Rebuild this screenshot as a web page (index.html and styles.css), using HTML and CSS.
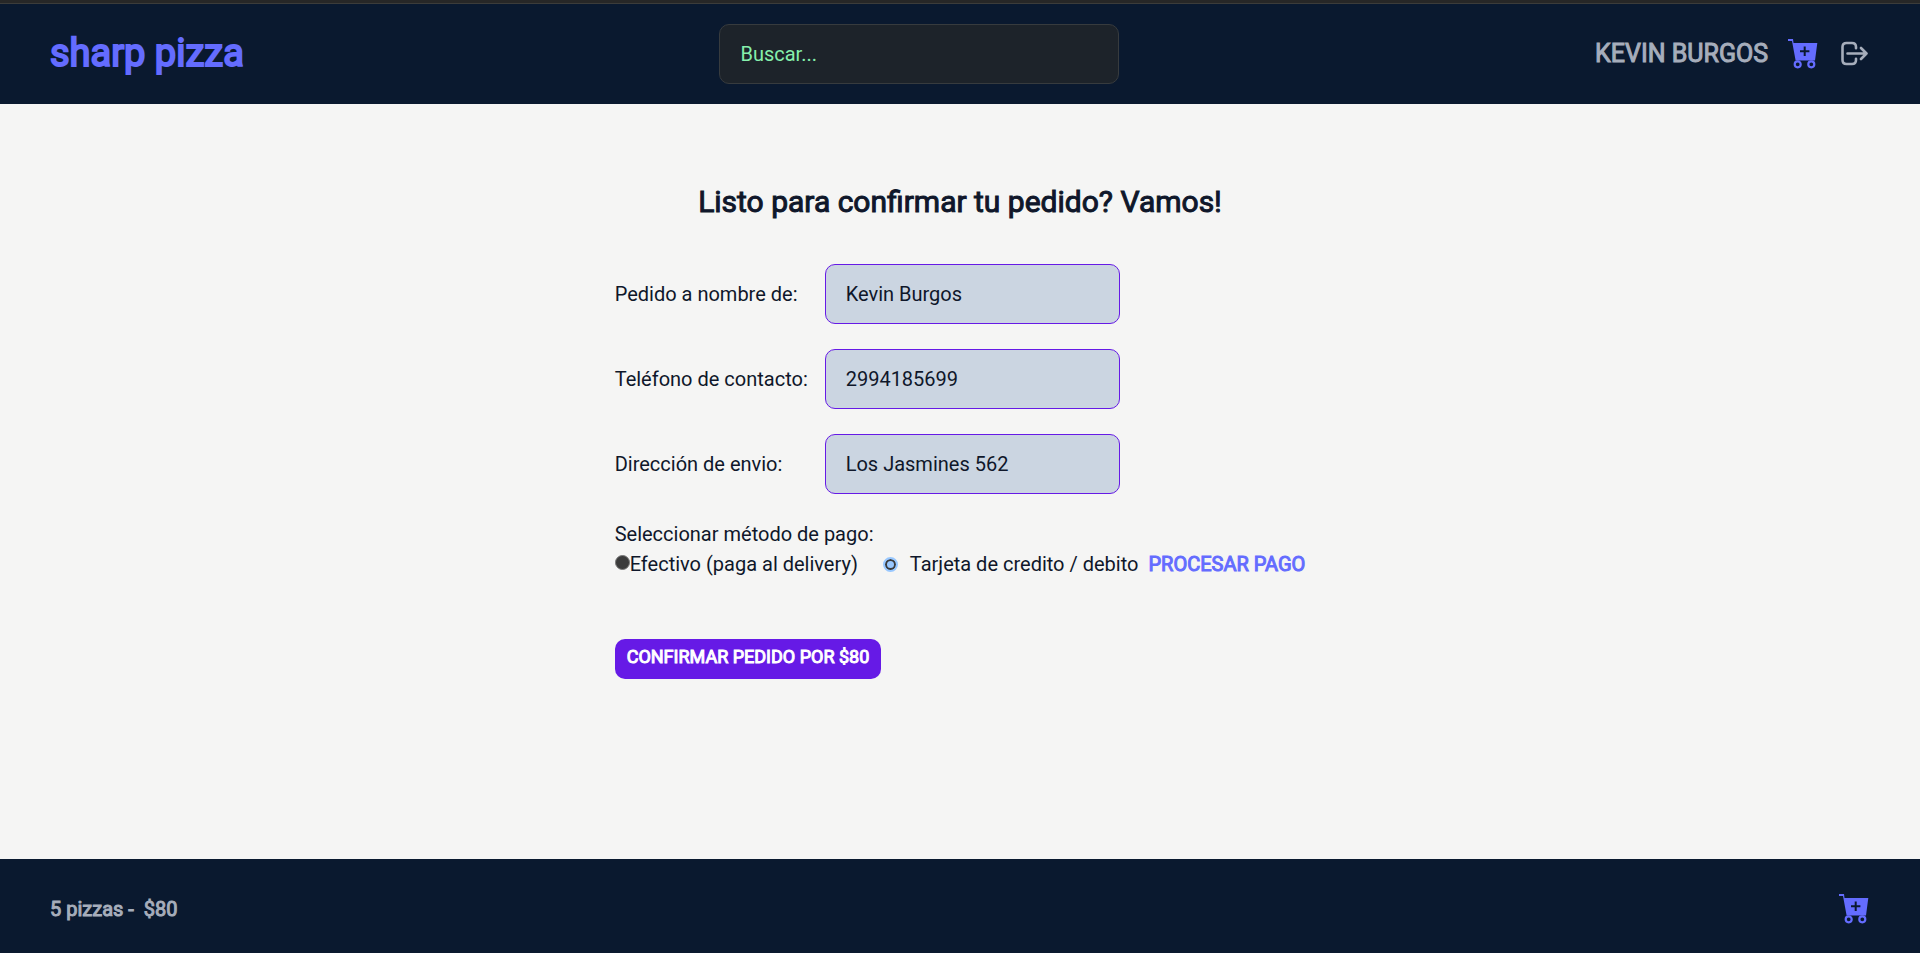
FILE: index.html
```html
<!DOCTYPE html>
<html lang="es">
<head>
<meta charset="utf-8">
<title>sharp pizza</title>
<link rel="stylesheet" href="styles.css">
</head>
<body>
<svg class="sprite" aria-hidden="true">
  <symbol id="cart" viewBox="0 0 30 30">
    <path fill-rule="evenodd" fill="currentColor" d="M0 0H5L5.500 4H29.300L27 21.500H7.600L4 2H0ZM15.700 7.600V11.300H12V13.300H15.700V17H17.700V13.300H21.400V11.300H17.700V7.600Z"/>
    <circle cx="9.700" cy="25.300" r="3" fill="none" stroke="currentColor" stroke-width="2.200"/>
    <circle cx="23.300" cy="25.300" r="3" fill="none" stroke="currentColor" stroke-width="2.200"/>
  </symbol>
  <symbol id="logout" viewBox="0 0 30 30">
    <path fill="none" stroke="currentColor" stroke-width="2.600" stroke-linecap="round" stroke-linejoin="round" d="M18 9.300V8Q18 4 14 4H8.500Q4.500 4 4.500 8V21Q4.500 25 8.500 25H14Q18 25 18 21V19.700M9.500 14.500H28.500M23 9L28.500 14.500L23 20"/>
  </symbol>
</svg>
<header class="header">
  <a class="brand strong" href="#">sharp pizza</a>
  <input class="search" type="search" placeholder="Buscar..." aria-label="Buscar">
  <nav class="account">
    <span class="user strong">KEVIN BURGOS</span>
    <a class="icon-link cart-link" href="#" aria-label="Carrito"><svg class="icon"><use href="#cart"/></svg></a>
    <button class="icon-link" type="button" aria-label="Salir"><svg class="icon"><use href="#logout"/></svg></button>
  </nav>
</header>
<main class="main">
  <h1 class="title strong">Listo para confirmar tu pedido? Vamos!</h1>
  <form class="form">
    <div class="field"><label for="name">Pedido a nombre de:</label><input class="input" id="name" type="text" value="Kevin Burgos"></div>
    <div class="field"><label for="phone">Teléfono de contacto:</label><input class="input" id="phone" type="tel" value="2994185699"></div>
    <div class="field"><label for="address">Dirección de envio:</label><input class="input" id="address" type="text" value="Los Jasmines 562"></div>
    <fieldset class="payment">
      <legend>Seleccionar método de pago:</legend>
      <div class="options">
        <label class="option cash"><input class="radio" type="radio" name="payment">Efectivo (paga al delivery)</label>
        <label class="option card"><input class="radio" type="radio" name="payment" checked>Tarjeta de credito / debito</label>
        <a class="process strong" href="#">PROCESAR PAGO</a>
      </div>
    </fieldset>
    <button class="confirm strong" type="submit">CONFIRMAR PEDIDO POR $80</button>
  </form>
</main>
<footer class="footer">
  <p class="summary strong"><span>5 pizzas -</span><span>$80</span></p>
  <a class="icon-link cart-link" href="#" aria-label="Carrito"><svg class="icon"><use href="#cart"/></svg></a>
</footer>
</body>
</html>
```
FILE: styles.css
```css
* {
  box-sizing: border-box;
}

body {
  display: flex;
  flex-direction: column;
  min-height: 100vh;
  margin: 0;
  border-top: 3px solid #272727;
  background: #f5f5f4;
  color: #0f172a;
  font: 400 20px/30px Roboto, sans-serif;
}

a {
  text-decoration: none;
}

button,
input {
  font: inherit;
}

.sprite {
  position: absolute;
  width: 0;
  height: 0;
}

.strong {
  font-weight: 400;
  -webkit-text-stroke: 1px currentColor;
}

.header {
  display: flex;
  align-items: center;
  justify-content: space-between;
  padding: 20px 52px 20px 50px;
  border-top: 1px solid #3c3c3a;
  background: #0a192f;
}

.brand {
  padding-bottom: 2px;
  color: #646cff;
  font-size: 38px;
  line-height: 50px;
  -webkit-text-stroke-width: 2px;
}

.search {
  width: 400px;
  height: 60px;
  padding: 0 20px;
  border: 1px solid #373b3e;
  border-radius: 10px;
  background: #1d232a;
  color: #86efac;
}

.search::placeholder {
  color: #86efac;
  opacity: 1;
}

.account {
  display: flex;
  align-items: center;
  gap: 20px;
  color: #a6adbb;
}

.user {
  font-size: 25px;
}

.icon-link {
  display: flex;
  padding: 0;
  border: 0;
  background: none;
  color: #a6adbb;
}

.cart-link {
  color: #646cff;
}

.icon {
  width: 30px;
  height: 30px;
}

.main {
  display: flex;
  flex: 1;
  flex-direction: column;
  align-items: center;
  padding-top: 78px;
}

.title {
  margin: 0;
  font-size: 30px;
  line-height: 40px;
}

.form {
  display: flex;
  flex-direction: column;
  align-items: flex-start;
  gap: 25px;
  margin-top: 42px;
}

.field {
  display: grid;
  grid-template-columns: 210px 295px;
  align-items: center;
}

.input {
  width: 100%;
  height: 60px;
  padding: 0 20px;
  border: 1px solid #661ae6;
  border-radius: 10px;
  background: #cbd5e1;
  color: #0f172a;
}

.payment {
  margin: 0;
  padding: 0;
  border: 0;
}

.payment legend {
  padding: 0;
}

.options {
  display: flex;
  align-items: center;
  gap: 10px;
}

.option {
  display: flex;
  align-items: center;
}

.radio {
  width: 15px;
  height: 15px;
  margin: 0;
  border-radius: 50%;
  appearance: none;
}

.cash .radio {
  margin-bottom: 3px;
  border: 1px solid #767676;
  background: #3b3b3b;
}

.card {
  gap: 12px;
  margin-left: 15px;
}

.card .radio {
  border: 2px solid #99c8ff;
  background: #99c8ff;
  box-shadow: inset 0 0 0 2px #3b3b3b;
}

.process {
  color: #646cff;
}

.confirm {
  height: 40px;
  margin-top: 35px;
  padding: 0 12px 4px;
  border: 0;
  border-radius: 10px;
  background: #661ae6;
  color: #fff;
  font-size: 18px;
}

.footer {
  display: flex;
  align-items: center;
  justify-content: space-between;
  padding: 35px 51px 29px 50px;
  background: #0a192f;
}

.summary {
  display: flex;
  gap: 10px;
  margin: 0;
  color: #a6adbb;
}
```
